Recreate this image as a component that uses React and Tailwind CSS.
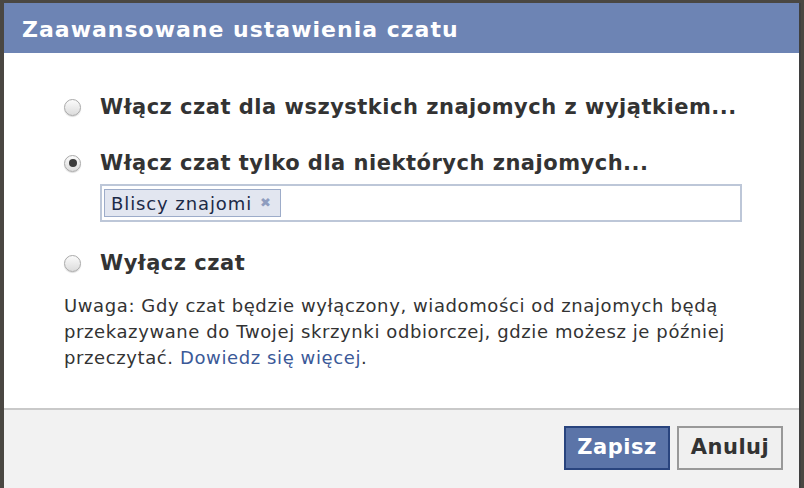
import { useState } from 'react';

const FONT = { fontFamily: '"DejaVu Sans", "Liberation Sans", sans-serif' };

function Radio({ checked }) {
  return (
    <span className="relative flex h-[17px] w-[17px] shrink-0 items-center justify-center rounded-full border border-[#a9a9a9] bg-gradient-to-b from-[#fbfbfb] to-[#dcdcdc] shadow-[0_1px_1px_rgba(0,0,0,0.15)]">
      {checked && <span className="h-[8px] w-[8px] rounded-full bg-[#3a3a3a]" />}
    </span>
  );
}

const OPTIONS = [
  { id: 'except', label: 'Włącz czat dla wszystkich znajomych z wyjątkiem...', gap: '' },
  { id: 'some', label: 'Włącz czat tylko dla niektórych znajomych...', gap: 'mt-[32px]' },
  { id: 'off', label: 'Wyłącz czat', gap: 'mt-[29px]' },
];

export default function App() {
  const [choice, setChoice] = useState('some');

  return (
    <div className="h-[488px] w-[804px] overflow-hidden bg-[#4a4742] pt-[3px] pl-[4px]" style={FONT}>
      <div className="flex h-[485px] w-[797px] flex-col border-r-[2px] border-[#3f3f3f] bg-white">
        {/* Title */}
        <div className="flex h-[50px] shrink-0 items-center bg-[#6d84b4] pl-[18px] pt-[3px]">
          <h1 className="text-[22px] font-bold tracking-[1px] text-white">Zaawansowane ustawienia czatu</h1>
        </div>

        {/* Body */}
        <div className="flex-1 pl-[60px] pt-[42px]">
          <div className="flex flex-col">
            {OPTIONS.map(o => (
              <div key={o.id} className={o.gap}>
                <label onClick={() => setChoice(o.id)} className="flex cursor-pointer items-center gap-[19px]">
                  <Radio checked={choice === o.id} />
                  <span className="text-[21px] font-bold leading-[24px] tracking-[0.5px] text-[#333]">{o.label}</span>
                </label>
                {o.id === 'some' && (
                  <div className="ml-[36px] mt-[9px] flex h-[38px] w-[642px] items-center border-2 border-[#bdc7d8] px-[2px]">
                    <span className="flex h-[28px] items-center gap-[8px] border border-[#9dacc9] bg-[#e2e6f0] pl-[6px] pr-[8px] text-[18px] tracking-[0.9px] text-[#1c2a47]">
                      Bliscy znajomi
                      <span className="text-[13px] font-bold text-[#8f9dbf]">✖</span>
                    </span>
                  </div>
                )}
              </div>
            ))}
          </div>

          <p className="mt-[18px] w-[700px] text-[18px] leading-[26px] tracking-[0.6px] text-[#333]">
            Uwaga: Gdy czat będzie wyłączony, wiadomości od znajomych będą przekazywane do Twojej skrzynki odbiorczej, gdzie możesz je później przeczytać.{' '}
            <a className="text-[#3b5998]">Dowiedz się więcej</a>.
          </p>
        </div>

        {/* Footer */}
        <div className="flex h-[80px] shrink-0 items-center justify-end gap-[7px] border-t-2 border-[#c9c9c9] bg-[#f2f2f2] pr-[16px] pb-[2px]">
          <button className="h-[44px] w-[106px] border-2 border-[#29447e] bg-[#5b74a8] text-[21px] font-bold tracking-[0.5px] text-white">Zapisz</button>
          <button className="h-[44px] w-[106px] border-2 border-[#999] bg-[#f0f0f0] text-[21px] font-bold tracking-[0.5px] text-[#333]">Anuluj</button>
        </div>
      </div>
    </div>
  );
}
